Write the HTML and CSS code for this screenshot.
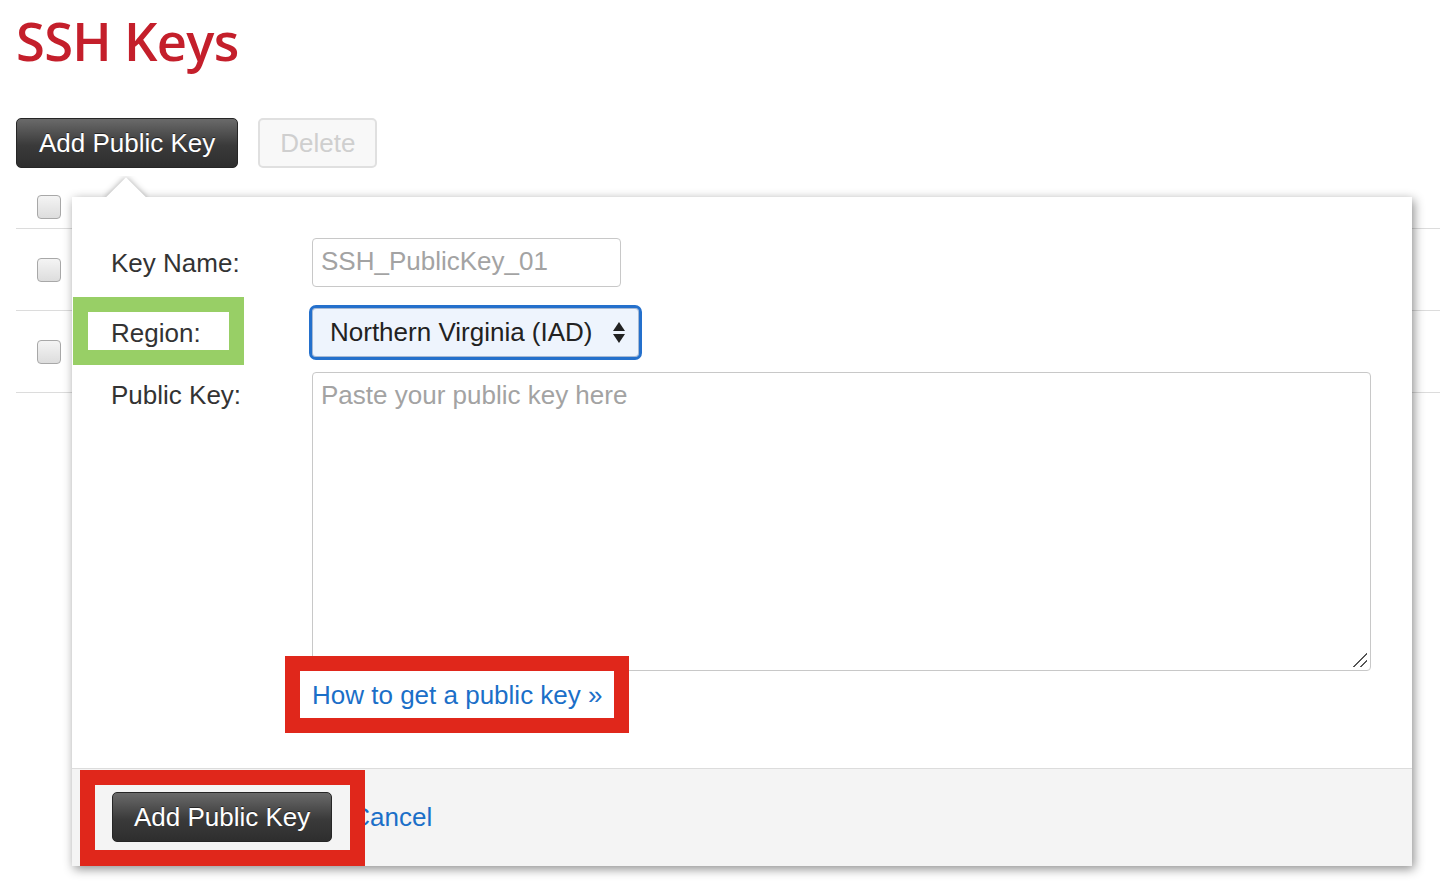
FILE: index.html
```html
<!DOCTYPE html>
<html lang="en">
<head>
<meta charset="utf-8">
<title>SSH Keys</title>
<link rel="stylesheet" href="styles.css">
</head>
<body>
<div class="page">
  <h1 class="title">SSH Keys</h1>
  <div class="toolbar">
    <button class="btn btn-dark btn-top">Add Public Key</button>
    <button class="btn btn-disabled">Delete</button>
  </div>
  <div class="table-wrap">
    <div class="trow thead">
      <span class="check"></span>
      <span class="th">Fingerprint</span>
    </div>
    <div class="trow"><span class="check"></span></div>
    <div class="trow"><span class="check"></span></div>

    <div class="popover">
      <div class="arrow-clip"><div class="arrow"></div></div>
      <div class="form">
        <div class="row">
          <div class="label">Key Name:</div>
          <div class="input">SSH_PublicKey_01</div>
        </div>
        <div class="row row-region">
          <div class="label above">Region:</div>
          <div class="select">
            <span>Northern Virginia (IAD)</span>
            <span class="updown"><i class="up"></i><i class="down"></i></span>
          </div>
        </div>
        <div class="row row-top">
          <div class="label label-top">Public Key:</div>
          <div class="textarea">Paste your public key here<span class="grip"></span></div>
        </div>
        <div class="help"><a class="link above">How to get a public key »</a></div>
      </div>
      <div class="footer">
        <button class="btn btn-dark above">Add Public Key</button>
        <a class="link cancel">Cancel</a>
      </div>

      <div class="mark mark-green"></div>
      <div class="mark mark-red1"></div>
      <div class="mark mark-red2"></div>
    </div>
  </div>
</div>
</body>
</html>
```

FILE: styles.css
```css
* { box-sizing: border-box; }
html, body { margin: 0; padding: 0; background: #fff; }
body { font-family: "Liberation Sans", Arial, sans-serif; color: #333; min-height: 894px; }

.page { padding-left: 16px; width: 1440px; min-height: 894px; overflow: hidden; }

.title {
  margin: 14px 0 50px 0;
  height: 54px;
  line-height: 54px;
  font-family: "Open Sans", sans-serif;
  font-weight: 600;
  font-size: 52.5px;
  letter-spacing: -0.7px;
  color: #c41f2b;
}

.toolbar { display: flex; gap: 20px; height: 50px; }

.btn {
  font-family: "Liberation Sans", Arial, sans-serif;
  font-size: 26px;
  height: 50px;
  line-height: 48px;
  border-radius: 5px;
  cursor: pointer;
}
.btn-dark {
  padding: 0 21px;
  color: #fff;
  border: 1px solid #262626;
  background: linear-gradient(#6a6a6a, #3a3a3a 55%, #2e2e2e);
  text-shadow: 0 -1px 0 rgba(0,0,0,.5);
}
.btn-top { padding: 0 22px; }
.btn-disabled {
  padding: 0 20px;
  color: #cfcfcf;
  border: 2px solid #e0e0e0;
  background: #f8f8f8;
  line-height: 46px;
}

.table-wrap { position: relative; margin-top: 17px; }
.trow {
  height: 82px;
  border-bottom: 1px solid #dcdcdc;
  display: flex;
  align-items: center;
  padding-left: 21px;
  position: relative;
}
.thead { height: 44px; }
.check {
  width: 24px; height: 24px;
  border: 1px solid #a8a8a8;
  border-radius: 4px;
  background: linear-gradient(#f4f4f4, #dddddd);
}
.th {
  position: absolute;
  left: 602px;
  top: 9px;
  font-size: 20px;
  font-weight: bold;
  color: #555;
}

.popover {
  position: absolute;
  top: 12px;
  left: 56px;
  width: 1340px;
  height: 669px;
  background: #fff;
  box-shadow: 2px 3px 10px rgba(0,0,0,.45);
  display: flex;
  flex-direction: column;
  z-index: 5;
}
.arrow-clip {
  position: absolute;
  top: -21px;
  left: 30px;
  width: 48px;
  height: 21px;
  overflow: hidden;
}
.arrow {
  position: absolute;
  left: 10px;
  top: 7px;
  width: 28px;
  height: 28px;
  background: #fff;
  transform: rotate(45deg);
  box-shadow: 0 0 6px rgba(0,0,0,.35);
}

.form {
  flex: 1;
  padding: 41px 41px 0 39px;
  display: flex;
  flex-direction: column;
}
.row { display: flex; align-items: center; }
.row-region { margin-top: 18px; }
.row-top { margin-top: 12px; align-items: flex-start; }
.label {
  width: 201px;
  font-size: 26px;
  line-height: 30px;
  color: #333;
}
.label-top { padding-top: 8px; }
.above { position: relative; z-index: 2; }

.input {
  width: 309px;
  height: 49px;
  border: 1px solid #c8c8c8;
  border-radius: 4px;
  padding-left: 8px;
  font-size: 26px;
  line-height: 45px;
  color: #a3a3a3;
}
.select {
  margin-left: -3px;
  width: 333px;
  height: 55px;
  border: 3px solid #2470cc;
  border-radius: 7px;
  background: #eef4fd;
  box-shadow: inset 0 0 0 1px #a7b9d3;
  display: flex;
  align-items: center;
  justify-content: space-between;
  padding: 0 14px 0 18px;
  font-size: 26px;
  color: #222;
}
.updown { display: flex; flex-direction: column; gap: 3px; }
.updown i { display: block; width: 0; height: 0; border-left: 6px solid transparent; border-right: 6px solid transparent; }
.updown .up { border-bottom: 9px solid #222; }
.updown .down { border-top: 9px solid #222; }

.textarea {
  position: relative;
  width: 1059px;
  height: 299px;
  border: 1px solid #c8c8c8;
  border-radius: 4px;
  padding: 7px 8px;
  font-size: 26px;
  line-height: 30px;
  color: #a3a3a3;
}
.grip {
  position: absolute;
  right: 3px;
  bottom: 3px;
  width: 14px;
  height: 14px;
  background:
    linear-gradient(135deg, transparent 48%, #555 48%, #555 56%, transparent 56%, transparent 72%, #555 72%, #555 80%, transparent 80%);
}

.help { margin: 9px 0 0 201px; line-height: 30px; }
.link {
  font-size: 26px;
  color: #1b6fc8;
  text-decoration: none;
  cursor: pointer;
}

.footer {
  height: 98px;
  border-top: 1px solid #dcdcdc;
  background: #f4f4f4;
  display: flex;
  align-items: flex-start;
  padding: 23px 0 0 40px;
}
.cancel { margin-left: 19px; line-height: 50px; }

.mark { position: absolute; z-index: 1; border-style: solid; border-width: 15px; }
.mark-green { left: 1px; top: 100px; width: 171px; height: 68px; border-color: #98cf66; background: #fff; }
.mark-red1 { left: 213px; top: 459px; width: 344px; height: 77px; border-color: #e0271b; background: #fff; }
.mark-red2 { left: 8px; top: 573px; width: 285px; height: 96px; border-color: #e0271b; border-bottom-width: 16px; background: #f4f4f4; }
```
